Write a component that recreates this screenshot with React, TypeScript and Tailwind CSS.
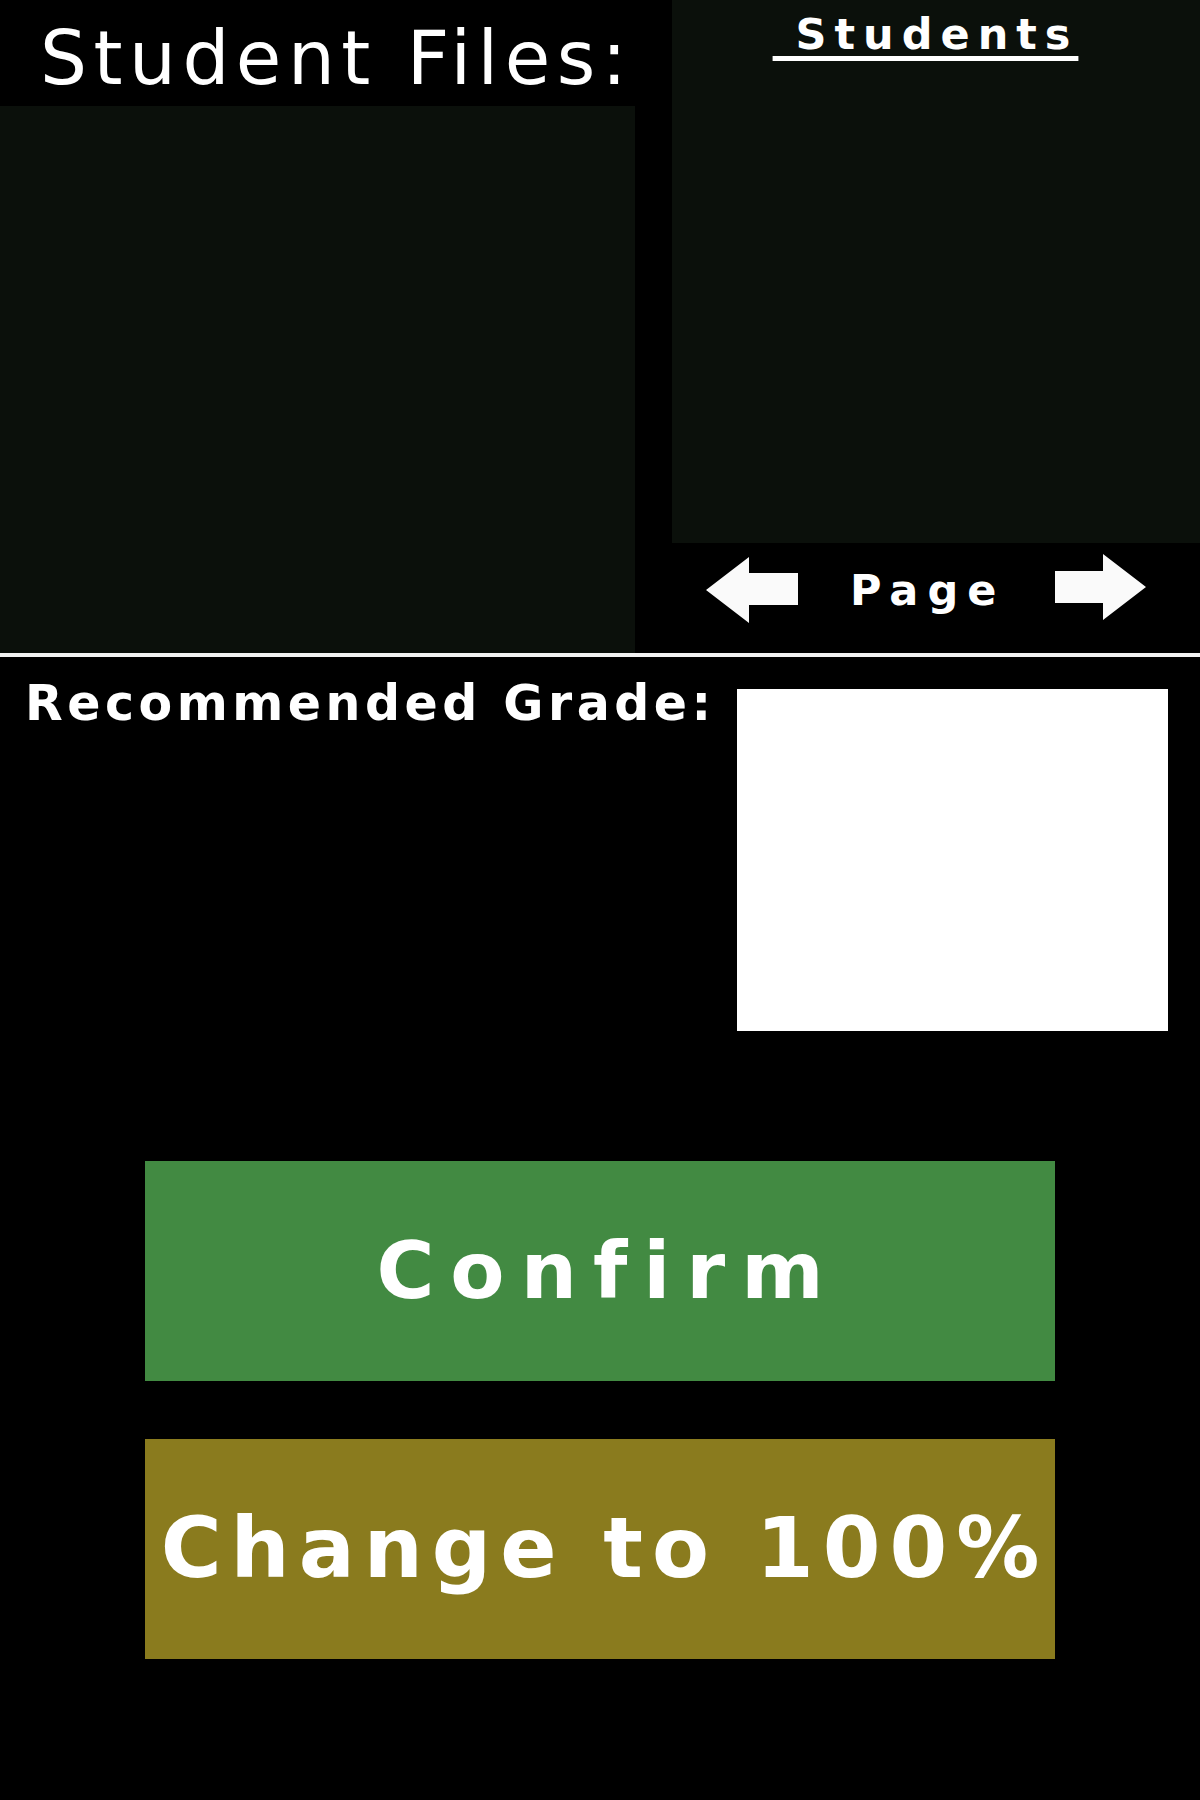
export default function App() {
  return (
    <div className="w-[1200px] h-[1800px] bg-black text-white overflow-hidden font-['DejaVu_Sans',sans-serif]">
      {/* top: files + student list */}
      <div className="flex h-[653px]">
        <div className="w-[635px] flex flex-col">
          <div className="h-[106px] pl-[40px] flex items-center">
            <h1 className="text-[74px] leading-none tracking-[6.5px] pt-[10px] whitespace-nowrap">Student Files:</h1>
          </div>
          <div className="flex-1 bg-[#0b100b]" />
        </div>
        <div className="ml-[37px] flex-1 flex flex-col">
          <div className="h-[543px] bg-[#0b100b] flex justify-center">
            <h2 className="mt-[13px] ml-[-21px] text-[43px] leading-none font-bold tracking-[8px] underline decoration-[5px] underline-offset-[7px] [text-decoration-skip-ink:none] whitespace-pre">
              {" Students"}
            </h2>
          </div>
          <div className="flex-1 flex items-center pl-[34px] pb-[16px]">
            <button className="w-[92px] h-[66px]">
              <svg viewBox="0 0 92 66" className="w-full h-full">
                <polygon points="0,33 43,0 43,16 92,16 92,48 43,48 43,66" fill="#fafafa" />
              </svg>
            </button>
            <span className="ml-[52px] text-[43px] font-bold leading-none tracking-[9px]">Page</span>
            <button className="ml-[50px] w-[91px] h-[66px] mt-[-6px]">
              <svg viewBox="0 0 91 66" className="w-full h-full">
                <polygon points="91,33 48,0 48,17 0,17 0,49 48,49 48,66" fill="#fafafa" />
              </svg>
            </button>
          </div>
        </div>
      </div>

      <div className="h-[4px] bg-[#f2f2f2]" />

      {/* grade */}
      <div className="flex items-start pt-[22px] pl-[25px] pr-[32px]">
        <p className="text-[49px] font-bold leading-none tracking-[4.5px] whitespace-nowrap">Recommended Grade:</p>
        <div className="ml-auto mt-[10px] w-[431px] h-[342px] bg-white" />
      </div>

      {/* actions */}
      <div className="flex flex-col items-center gap-[58px] mt-[130px]">
        <button className="w-[910px] h-[220px] bg-[#428a42] text-[79px] font-bold tracking-[16px] pl-[16px] whitespace-nowrap">Confirm</button>
        <button className="w-[910px] h-[220px] bg-[#8a7b1e] text-[83px] font-bold tracking-[9px] pl-[9px] whitespace-nowrap">Change to 100%</button>
      </div>
    </div>
  );
}
